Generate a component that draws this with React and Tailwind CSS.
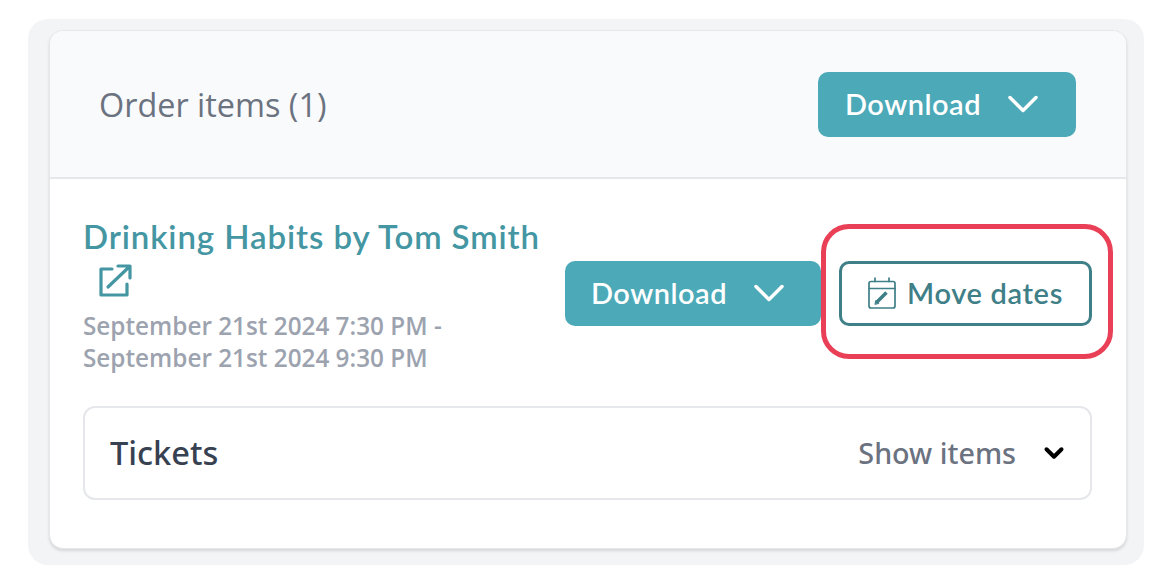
import { ChevronDown } from 'lucide-react';

const quick = "font-['Lato',sans-serif]";

function DownloadButton({ width }) {
  return (
    <button className={`flex h-[65px] shrink-0 items-center justify-center gap-[16px] rounded-[10px] bg-[#4ba9b8] text-[29px] font-semibold tracking-[0.5px] text-white ${quick} ${width}`}>
      Download
      <ChevronDown className="h-[52px] w-[52px]" strokeWidth={1.6} />
    </button>
  );
}

function CalendarEditIcon() {
  return (
    <svg viewBox="0 0 28 32" className="h-[32px] w-[28px]" fill="none" stroke="#3f7f88" strokeWidth="1.7" strokeLinecap="round" strokeLinejoin="round">
      <rect x="1" y="4.5" width="26" height="26.5" rx="2" />
      <path d="M1 11.5h26M7 1v3.5M21 1v3.5" />
      <path d="M8.5 25.5l10-10" strokeWidth="3.6" strokeLinecap="butt" />
      <path d="M7 27l.8-3.5 2.7 2.7z" fill="#3f7f88" strokeWidth="1" />
    </svg>
  );
}

function ExternalIcon() {
  return (
    <svg viewBox="0 0 34 34" className="h-[34px] w-[34px]" fill="none" stroke="#4596a3" strokeWidth="3.2" strokeLinecap="round" strokeLinejoin="round">
      <path d="M14 5H3v26h26V20" />
      <path d="M10 23L31 3M20 2h12v12" />
    </svg>
  );
}

export default function App() {
  return (
    <div className="h-[584px] w-[1176px] bg-white pl-[28px] pt-[19px] font-['Open_Sans',sans-serif]">
      <div className="h-[546px] w-[1116px] rounded-[20px] bg-[#f3f4f6] pl-[21px] pt-[11px]">
        <div className="h-[519px] w-[1078px] overflow-hidden rounded-[14px] border border-[#e5e7eb] bg-white shadow-[0_2px_3px_rgba(0,0,0,0.12)]">
          <div className="flex h-[148px] items-center justify-between border-b-2 border-[#e5e7eb] bg-[#f9fafb] pl-[49px] pr-[50px]">
            <span className="text-[32.4px] text-[#6b7280]">Order items (1)</span>
            <DownloadButton width="w-[258px]" />
          </div>
          <div className="pl-[33px] pr-[34px] pt-[37px]">
            <div className="relative flex items-center">
              <div className="w-[482px]">
                <div className={`text-[33px] leading-[40px] font-semibold tracking-[0.9px] text-[#4596a3] ${quick}`}>
                  Drinking Habits by Tom Smith
                </div>
                <div className="mt-[8px] pl-[15px]">
                  <ExternalIcon />
                </div>
                <div className="mt-[12px] text-[24.3px] leading-[32px] font-semibold text-[#9ca3af]">
                  September 21st 2024 7:30 PM -<br />
                  September 21st 2024 9:30 PM
                </div>
              </div>
              <div className="mb-[4px] flex items-center">
                <DownloadButton width="w-[256px]" />
                <button className={`ml-[18px] flex h-[65px] w-[253px] items-center justify-center gap-[11px] rounded-[10px] border-[3px] border-[#3f7f88] bg-white text-[29px] font-semibold tracking-[0.65px] text-[#3f7f88] ${quick}`}>
                  <CalendarEditIcon />
                  Move dates
                </button>
              </div>
              <div className="absolute left-[738px] top-[8px] h-[135px] w-[292px] rounded-[28px] border-[5px] border-[#ea4057]" />
            </div>
            <div className="mt-[32px] flex h-[94px] items-center justify-between rounded-[12px] border-2 border-[#e5e7eb] pl-[25px] pr-[21px] font-['Noto_Sans',sans-serif]">
              <span className="text-[32.6px] font-medium text-[#374151]">Tickets</span>
              <div className="flex items-center gap-[23px]">
                <span className="text-[28.7px] font-medium text-[#6b7280]">Show items</span>
                <ChevronDown className="h-[30px] w-[30px] text-black" strokeWidth={3.2} />
              </div>
            </div>
          </div>
        </div>
      </div>
    </div>
  );
}
